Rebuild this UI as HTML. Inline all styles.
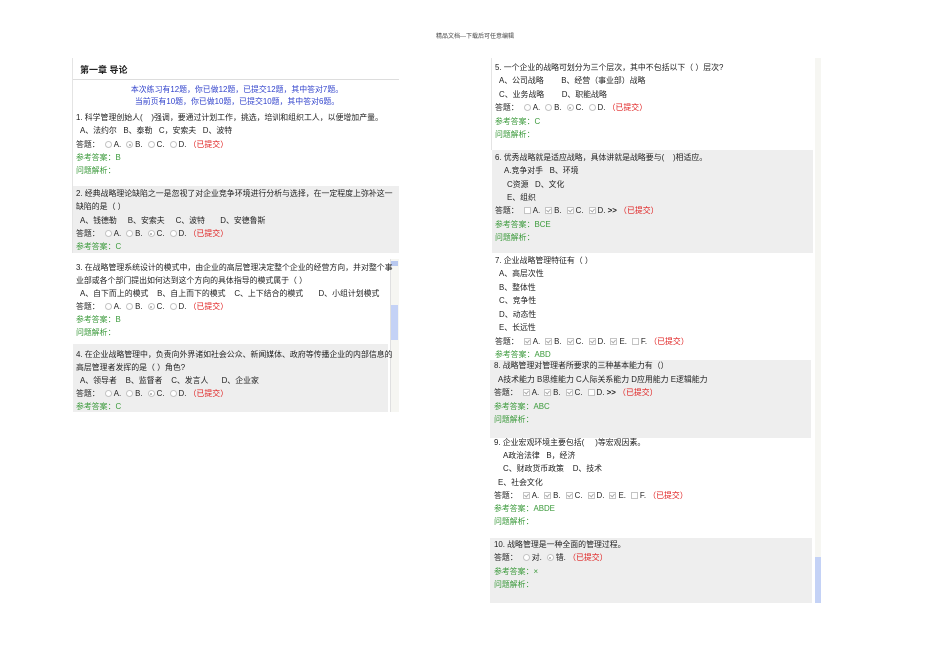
<!DOCTYPE html>
<html><head><meta charset="utf-8"><style>
*{margin:0;padding:0;box-sizing:border-box}
body{width:950px;height:672px;background:#fff;position:relative;overflow:hidden;font-family:"Liberation Sans","Noto Sans CJK SC",sans-serif;font-size:7.9px;color:#222}
.a{position:absolute;white-space:nowrap;line-height:10px}
.bg{position:absolute;background:#eeeeee}
.g{color:#3b9a3b}
.r{color:#e02020}
.b{color:#3344cc}
.rd{display:inline-block;width:7px;height:7px;border:1px solid #c4c4c4;border-radius:50%;vertical-align:-1px;margin:0 2px 0 5px;background:#fff;position:relative}
.rd.on:after{content:"";position:absolute;left:1.5px;top:1.5px;width:2px;height:2px;border-radius:50%;background:#aaa}
.cb{display:inline-block;width:7px;height:7px;border:1px solid #c4c4c4;vertical-align:-1px;margin:0 2px 0 5px;background:#fff;position:relative}
.cb.on:after{content:"";position:absolute;left:1px;top:0px;width:2px;height:3px;border-right:1px solid #aaa;border-bottom:1px solid #aaa;transform:rotate(40deg)}
</style></head><body>
<div class="a" style="left:0;width:950px;text-align:center;top:32px;font-size:6px;color:#444">精品文档---下载后可任意编辑</div>

<div class="a" style="left:80px;top:64px;font-size:9px;font-weight:bold;line-height:12px">第一章 导论</div>
<div style="position:absolute;left:73px;top:79px;width:326px;height:1px;background:#ddd"></div>
<div style="position:absolute;left:72px;top:58px;width:1px;height:195px;background:#e4e4e4"></div>
<div class="a b" style="left:72px;width:330px;text-align:center;top:85px">本次练习有12题，你已做12题，已提交12题，其中答对7题。</div>
<div class="a b" style="left:72px;width:330px;text-align:center;top:97px">当前页有10题，你已做10题，已提交10题，其中答对6题。</div>

<div class="bg" style="left:73px;top:186px;width:326px;height:67px"></div>
<div class="bg" style="left:73px;top:344px;width:315px;height:68px"></div>
<div style="position:absolute;left:390px;top:259px;width:9px;height:153px;background:#f6f6f2;border-left:1px solid #e0e0e0"></div>
<div style="position:absolute;left:391px;top:261px;width:7px;height:5px;background:#b8c8ee"></div>
<div style="position:absolute;left:391px;top:305px;width:7px;height:35px;background:#c4d2f6"></div>

<div class="a" style="left:76px;top:113px">1. 科学管理创始人(&nbsp;&nbsp;&nbsp;&nbsp;)强调，要通过计划工作，挑选，培训和组织工人，以便增加产量。</div>
<div class="a" style="left:80px;top:126px">A、法约尔&nbsp;&nbsp;&nbsp;B、泰勒&nbsp;&nbsp;&nbsp;C，安索夫&nbsp;&nbsp;&nbsp;D、波特</div>
<div class="a" style="left:76px;top:140px">答题：<span class="rd"></span>A.<span class="rd on"></span>B.<span class="rd"></span>C.<span class="rd"></span>D. <span class="r">（已提交）</span></div>
<div class="a g" style="left:76px;top:153px">参考答案：B</div>
<div class="a g" style="left:76px;top:166px">问题解析：</div>

<div class="a" style="left:76px;top:189px">2. 经典战略理论缺陷之一是忽视了对企业竞争环境进行分析与选择，在一定程度上弥补这一</div>
<div class="a" style="left:76px;top:202px">缺陷的是（ ）</div>
<div class="a" style="left:80px;top:216px">A、钱德勒&nbsp;&nbsp;&nbsp;&nbsp;&nbsp;B、安索夫&nbsp;&nbsp;&nbsp;&nbsp;&nbsp;C、波特&nbsp;&nbsp;&nbsp;&nbsp;&nbsp;&nbsp;&nbsp;D、安德鲁斯</div>
<div class="a" style="left:76px;top:229px">答题：<span class="rd"></span>A.<span class="rd"></span>B.<span class="rd on"></span>C.<span class="rd"></span>D. <span class="r">（已提交）</span></div>
<div class="a g" style="left:76px;top:242px">参考答案：C</div>

<div class="a" style="left:76px;top:263px">3. 在战略管理系统设计的模式中，由企业的高层管理决定整个企业的经营方向，并对整个事</div>
<div class="a" style="left:76px;top:276px">业部或各个部门提出如何达到这个方向的具体指导的模式属于（ ）</div>
<div class="a" style="left:80px;top:289px">A、自下而上的模式&nbsp;&nbsp;&nbsp;&nbsp;B、自上而下的模式&nbsp;&nbsp;&nbsp;&nbsp;C、上下结合的模式&nbsp;&nbsp;&nbsp;&nbsp;&nbsp;&nbsp;&nbsp;D、小组计划模式</div>
<div class="a" style="left:76px;top:302px">答题：<span class="rd"></span>A.<span class="rd"></span>B.<span class="rd on"></span>C.<span class="rd"></span>D. <span class="r">（已提交）</span></div>
<div class="a g" style="left:76px;top:315px">参考答案：B</div>
<div class="a g" style="left:76px;top:328px">问题解析：</div>

<div class="a" style="left:76px;top:350px">4. 在企业战略管理中，负责向外界诸如社会公众、新闻媒体、政府等传播企业的内部信息的</div>
<div class="a" style="left:76px;top:363px">高层管理者发挥的是（ ）角色?</div>
<div class="a" style="left:80px;top:376px">A、领导者&nbsp;&nbsp;&nbsp;&nbsp;B、监督者&nbsp;&nbsp;&nbsp;&nbsp;C、发言人&nbsp;&nbsp;&nbsp;&nbsp;&nbsp;&nbsp;D、企业家</div>
<div class="a" style="left:76px;top:389px">答题：<span class="rd"></span>A.<span class="rd"></span>B.<span class="rd on"></span>C.<span class="rd"></span>D. <span class="r">（已提交）</span></div>
<div class="a g" style="left:76px;top:402px">参考答案：C</div>

<div style="position:absolute;left:491px;top:58px;width:1px;height:92px;background:#e4e4e4"></div>
<div class="bg" style="left:492px;top:150px;width:321px;height:103px"></div>
<div class="bg" style="left:490px;top:360px;width:321px;height:78px"></div>
<div class="bg" style="left:490px;top:538px;width:322px;height:65px"></div>
<div style="position:absolute;left:815px;top:58px;width:6px;height:545px;background:#f6f6f2"></div>
<div style="position:absolute;left:815px;top:557px;width:6px;height:46px;background:#c4d2f6"></div>

<div class="a" style="left:495px;top:63px">5. 一个企业的战略可划分为三个层次，其中不包括以下（ ）层次?</div>
<div class="a" style="left:499px;top:76px">A、公司战略&nbsp;&nbsp;&nbsp;&nbsp;&nbsp;&nbsp;&nbsp;&nbsp;B、经营（事业部）战略</div>
<div class="a" style="left:499px;top:90px">C、业务战略&nbsp;&nbsp;&nbsp;&nbsp;&nbsp;&nbsp;&nbsp;&nbsp;D、职能战略</div>
<div class="a" style="left:495px;top:103px">答题：<span class="rd"></span>A.<span class="rd"></span>B.<span class="rd on"></span>C.<span class="rd"></span>D. <span class="r">（已提交）</span></div>
<div class="a g" style="left:495px;top:117px">参考答案：C</div>
<div class="a g" style="left:495px;top:130px">问题解析：</div>

<div class="a" style="left:495px;top:153px">6. 优秀战略就是适应战略，具体讲就是战略要与(&nbsp;&nbsp;&nbsp;&nbsp;)相适应。</div>
<div class="a" style="left:504px;top:166px">A.竞争对手&nbsp;&nbsp;&nbsp;B、环境</div>
<div class="a" style="left:507px;top:180px">C资源&nbsp;&nbsp;&nbsp;D、文化</div>
<div class="a" style="left:507px;top:193px">E、组织</div>
<div class="a" style="left:495px;top:206px">答题：<span class="cb"></span>A.<span class="cb on"></span>B.<span class="cb on"></span>C.<span class="cb on"></span>D. <b>&gt;&gt;</b> <span class="r">（已提交）</span></div>
<div class="a g" style="left:495px;top:220px">参考答案：BCE</div>
<div class="a g" style="left:495px;top:233px">问题解析：</div>

<div class="a" style="left:495px;top:256px">7. 企业战略管理特征有（ ）</div>
<div class="a" style="left:499px;top:269px">A、高层次性</div>
<div class="a" style="left:499px;top:283px">B、整体性</div>
<div class="a" style="left:499px;top:296px">C、竞争性</div>
<div class="a" style="left:499px;top:310px">D、动态性</div>
<div class="a" style="left:499px;top:323px">E、长远性</div>
<div class="a" style="left:495px;top:337px">答题：<span class="cb on"></span>A.<span class="cb on"></span>B.<span class="cb on"></span>C.<span class="cb on"></span>D.<span class="cb on"></span>E.<span class="cb"></span>F. <span class="r">（已提交）</span></div>
<div class="a g" style="left:495px;top:350px">参考答案：ABD</div>

<div class="a" style="left:494px;top:361px">8. 战略管理对管理者所要求的三种基本能力有（）</div>
<div class="a" style="left:498px;top:375px">A技术能力 B思维能力 C人际关系能力 D应用能力 E逻辑能力</div>
<div class="a" style="left:494px;top:388px">答题：<span class="cb on"></span>A.<span class="cb on"></span>B.<span class="cb on"></span>C.<span class="cb"></span>D. <b>&gt;&gt;</b> <span class="r">（已提交）</span></div>
<div class="a g" style="left:494px;top:402px">参考答案：ABC</div>
<div class="a g" style="left:494px;top:415px">问题解析：</div>

<div class="a" style="left:494px;top:438px">9. 企业宏观环境主要包括(&nbsp;&nbsp;&nbsp;&nbsp;&nbsp;)等宏观因素。</div>
<div class="a" style="left:503px;top:451px">A政治法律&nbsp;&nbsp;&nbsp;B，经济</div>
<div class="a" style="left:503px;top:464px">C、财政货币政策&nbsp;&nbsp;&nbsp;&nbsp;D、技术</div>
<div class="a" style="left:498px;top:478px">E、社会文化</div>
<div class="a" style="left:494px;top:491px">答题：<span class="cb on"></span>A.<span class="cb on"></span>B.<span class="cb on"></span>C.<span class="cb on"></span>D.<span class="cb on"></span>E.<span class="cb"></span>F. <span class="r">（已提交）</span></div>
<div class="a g" style="left:494px;top:504px">参考答案：ABDE</div>
<div class="a g" style="left:494px;top:517px">问题解析：</div>

<div class="a" style="left:494px;top:540px">10. 战略管理是一种全面的管理过程。</div>
<div class="a" style="left:494px;top:553px">答题：<span class="rd"></span>对.<span class="rd on"></span>错. <span class="r">（已提交）</span></div>
<div class="a g" style="left:494px;top:567px">参考答案：×</div>
<div class="a g" style="left:494px;top:580px">问题解析：</div>
</body></html>
